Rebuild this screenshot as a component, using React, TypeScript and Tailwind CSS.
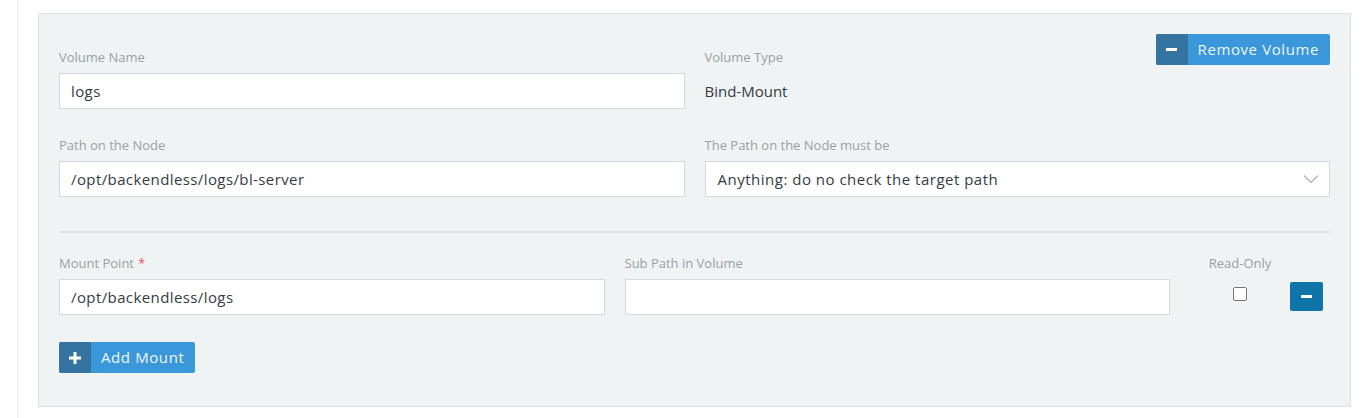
const font = { fontFamily: '"Open Sans", "Noto Sans", sans-serif' }

function Label({ children, required }: { children: React.ReactNode; required?: boolean }) {
  return (
    <div className="mb-[7px] h-[18px] text-[13px] leading-[18px] text-[#9aa0a4]">
      {children}
      {required && <span className="ml-1 text-[#e8505b]">*</span>}
    </div>
  )
}

function TextInput({ value }: { value?: string }) {
  return (
    <div className="flex h-[36px] items-center border border-[#d3d9dc] bg-white px-[11px] text-[15px] tracking-[0.4px] text-[#353b42]">
      {value}
    </div>
  )
}

function IconButton({ icon, label }: { icon: "plus" | "minus"; label: string }) {
  return (
    <button className="flex h-[31px] items-stretch overflow-hidden rounded-[2px] bg-[#3a97da] text-[15px] tracking-[0.6px] text-[#eef6fc]">
      <span className="flex w-[32px] items-center justify-center bg-[#3574a1]">
        {icon === "minus" ? (
          <span className="block h-[3px] w-[11px] bg-white" />
        ) : (
          <svg width="12" height="12" viewBox="0 0 12 12">
            <rect x="4.5" y="0" width="3" height="12" fill="white" />
            <rect x="0" y="4.5" width="12" height="3" fill="white" />
          </svg>
        )}
      </span>
      <span className="flex items-center pl-[10px] pr-[11px]">{label}</span>
    </button>
  )
}

export default function App() {
  return (
    <div className="min-h-[418px] bg-white" style={font}>
      <div className="ml-[17px] min-h-[418px] border-l border-[#ececec] pl-[20px] pr-[19px] pt-[13px]">
        <div className="border border-[#dce1e3] bg-[#f0f3f4] px-[20px] pb-[33px] pt-[20px]">
          <div className="grid grid-cols-2 gap-x-5">
            <div className="pt-[14px]">
              <Label>Volume Name</Label>
              <TextInput value="logs" />
            </div>
            <div className="flex items-start justify-between">
              <div className="pt-[14px]">
                <Label>Volume Type</Label>
                <div className="flex h-[36px] items-center text-[15px] text-[#353b42]">Bind-Mount</div>
              </div>
              <IconButton icon="minus" label="Remove Volume" />
            </div>
          </div>

          <div className="mt-[27px] grid grid-cols-2 gap-x-5">
            <div>
              <Label>Path on the Node</Label>
              <TextInput value="/opt/backendless/logs/bl-server" />
            </div>
            <div>
              <Label>The Path on the Node must be</Label>
              <div className="flex h-[36px] items-center justify-between border border-[#d3d9dc] bg-white pl-[12px] pr-[10px] text-[15px] tracking-[0.5px] text-[#353b42]">
                <span>Anything: do no check the target path</span>
                <svg width="16" height="10" viewBox="0 0 16 10" fill="none">
                  <path d="M1 1.5 L8 8.5 L15 1.5" stroke="#a8aeb2" strokeWidth="1.2" />
                </svg>
              </div>
            </div>
          </div>

          <div className="mt-[34px] h-[2px] bg-[#dde2e3]" />

          <div className="mt-[21px] flex items-start pr-[7px]">
            <div className="flex-1">
              <Label required>Mount Point</Label>
              <TextInput value="/opt/backendless/logs" />
            </div>
            <div className="ml-5 flex-1">
              <Label>Sub Path in Volume</Label>
              <TextInput />
            </div>
            <div className="ml-5 flex w-[100px] flex-col items-center">
              <Label>Read-Only</Label>
              <div className="mt-[8px] h-[14px] w-[14px] rounded-[2px] border border-[#767676] bg-white" />
            </div>
            <button className="mt-[28px] flex h-[29px] w-[33px] items-center justify-center rounded-[2px] bg-[#0f75a8]">
              <span className="block h-[3px] w-[11px] bg-white" />
            </button>
          </div>

          <div className="mt-[27px]">
            <IconButton icon="plus" label="Add Mount" />
          </div>
        </div>
      </div>
    </div>
  )
}
